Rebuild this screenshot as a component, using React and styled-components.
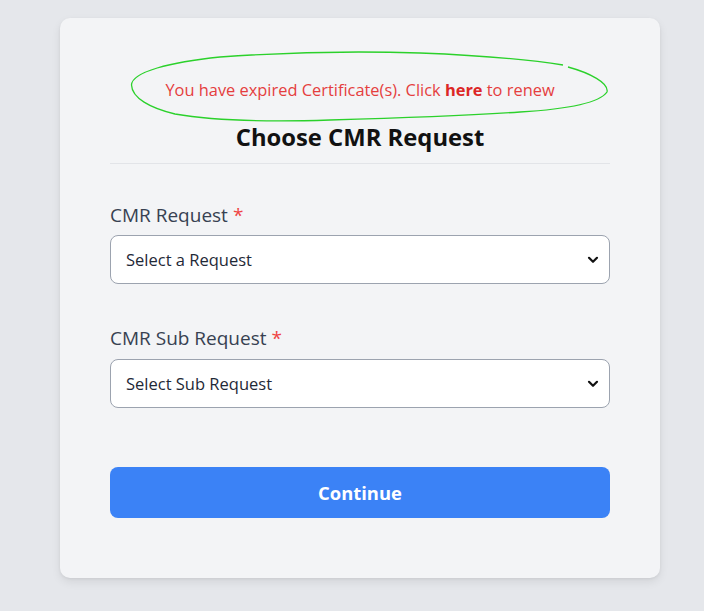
import React from 'react';
import styled, { createGlobalStyle } from 'styled-components';

const GlobalStyle = createGlobalStyle`
  html, body {
    margin: 0;
    padding: 0;
    background: #e5e7eb;
    font-family: "Open Sans", "Noto Sans", Arial, sans-serif;
  }
`;

const Page = styled.div`
  min-height: 611px;
  padding: 18px 0 0 60px;
  box-sizing: border-box;
  position: relative;
`;

const Card = styled.div`
  width: 600px;
  box-sizing: border-box;
  background: #f3f4f6;
  border-radius: 10px;
  box-shadow: 0 4px 10px rgba(0, 0, 0, 0.08), 0 1px 3px rgba(0, 0, 0, 0.06);
  padding: 60px 50px 60px;
  display: flex;
  flex-direction: column;
`;

const Notice = styled.p`
  margin: 0;
  text-align: center;
  color: #e53e3e;
  font-size: 16.4px;
  line-height: 24px;

  b {
    font-weight: 700;
    color: #dc2626;
  }
`;

const Title = styled.h2`
  margin: 20px 0 0;
  text-align: center;
  font-size: 23.8px;
  line-height: 30px;
  font-weight: 700;
  color: #111111;
  padding-bottom: 11px;
  border-bottom: 1px solid #e2e4e8;
`;

const Field = styled.div`
  display: flex;
  flex-direction: column;
  gap: ${p => p.$gap}px;
  margin-top: ${p => p.$top}px;
`;

const Label = styled.label`
  font-size: 19px;
  line-height: 28px;
  color: #374151;

  span {
    color: #ef4444;
    margin-left: 5px;
  }
`;

const SelectWrap = styled.div`
  position: relative;
`;

const Select = styled.select`
  width: 100%;
  height: 49px;
  box-sizing: border-box;
  appearance: none;
  background: #ffffff;
  border: 1px solid #9ca3af;
  border-radius: 8px;
  padding: 0 40px 0 15px;
  font-family: inherit;
  font-size: 16.5px;
  color: #1f2937;
`;

const Chevron = styled.svg`
  position: absolute;
  right: 11px;
  top: 50%;
  transform: translateY(-50%);
  pointer-events: none;
`;

const Button = styled.button`
  margin-top: 59px;
  height: 51px;
  border: none;
  border-radius: 8px;
  background: #3b82f6;
  color: #ffffff;
  font-family: inherit;
  font-size: 18.4px;
  font-weight: 700;
  cursor: pointer;
`;

const Scribble = styled.svg`
  position: absolute;
  left: 0;
  top: 0;
  pointer-events: none;
`;

const SelectField = ({ label, placeholder, top, gap }) => (
  <Field $top={top} $gap={gap}>
    <Label>
      {label}
      <span>*</span>
    </Label>
    <SelectWrap>
      <Select defaultValue="">
        <option value="">{placeholder}</option>
      </Select>
      <Chevron width="12" height="8" viewBox="0 0 12 8">
        <path d="M2 1.8 L6 5.8 L10 1.8" fill="none" stroke="#111" strokeWidth="2.2" strokeLinecap="round" strokeLinejoin="round" />
      </Chevron>
    </SelectWrap>
  </Field>
);

export default function App() {
  return (
    <>
      <GlobalStyle />
      <Page>
        <Card>
          <Notice>
            You have expired Certificate(s). Click <b>here</b> to renew
          </Notice>
          <Title>Choose CMR Request</Title>
          <SelectField label="CMR Request" placeholder="Select a Request" top={37} gap={6} />
          <SelectField label="CMR Sub Request" placeholder="Select Sub Request" top={40} gap={7} />
          <Button>Continue</Button>
        </Card>
        <Scribble width="704" height="611" viewBox="0 0 704 611">
          <path
            d="M563 65 C520 58 470 55 420 53 C360 51 290 52 220 57 C170 62 132 72 131.5 85 C132 98 150 108 175 114 C215 121 270 122 330 120 C400 118 460 116 520 112 C570 109 600 102 607 92 C609 83 590 73 568 67"
            fill="none"
            stroke="#2bd12b"
            strokeWidth="1.3"
          />
        </Scribble>
      </Page>
    </>
  );
}
